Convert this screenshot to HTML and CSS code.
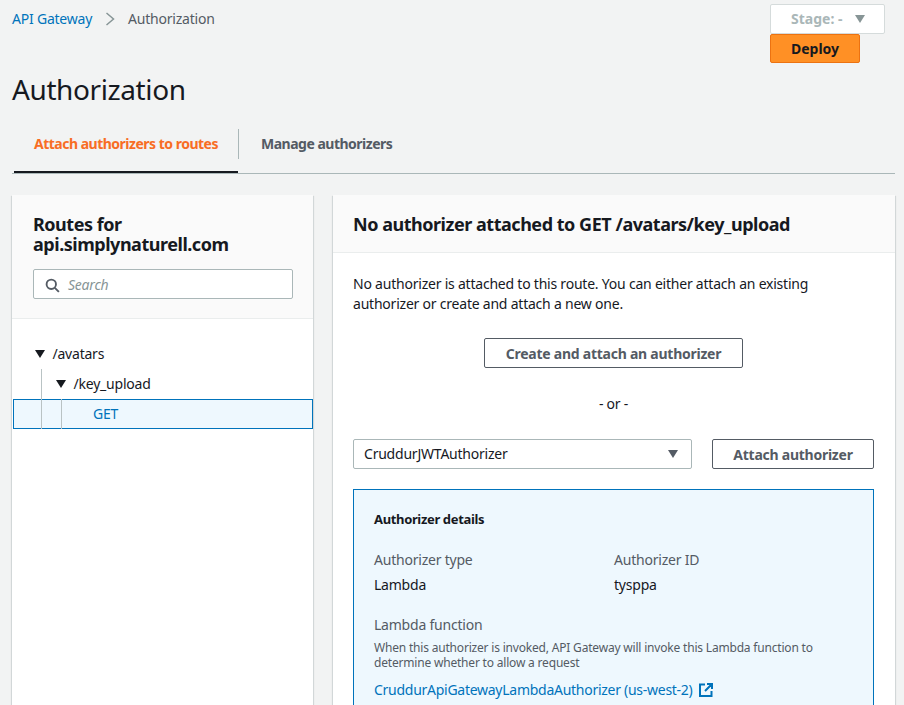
FILE: index.html
```html
<!DOCTYPE html>
<html>
<head>
    <title>Authorization</title>
    <link rel="stylesheet" href="styles.css">
</head>
<body>
    <div class="topbar">
        <nav class="crumbs">
            <a href="#">API Gateway</a>
            <svg class="crumbs__sep" width="10" height="14" viewBox="0 0 10 14"><path d="M1.5 1l7 6-7 6" fill="none" stroke="#879596" stroke-width="1.5"/></svg>
            <span>Authorization</span>
        </nav>
        <div class="actions">
            <div class="stage">
                <span>Stage: -</span>
                <span class="caret caret--grey"></span>
            </div>
            <button class="deploy">Deploy</button>
        </div>
    </div>

    <h1 class="title">Authorization</h1>

    <div class="tabs">
        <div class="tabs__item tabs__item--active">Attach authorizers to routes</div>
        <div class="tabs__item">Manage authorizers</div>
    </div>

    <div class="columns">
        <section class="panel panel--routes">
            <div class="panel__head panel__head--routes">
                <h2>Routes for api.simplynaturell.com</h2>
                <div class="search">
                    <svg width="15" height="15" viewBox="0 0 16 16"><circle cx="6.7" cy="6.7" r="5" fill="none" stroke="#545b64" stroke-width="2"/><path d="M10.500 10.500l4.300 4.300" stroke="#545b64" stroke-width="2"/></svg>
                    <span>Search</span>
                </div>
            </div>
            <div class="tree">
                <div class="tree__row tree__row--top"><span class="caret caret--dark"></span>/avatars</div>
                <div class="tree__row tree__row--child">
                    <i class="guide guide--one"></i>
                    <span class="caret caret--dark"></span>/key_upload
                </div>
                <div class="tree__row tree__row--selected">
                    <i class="guide guide--one"></i>
                    <i class="guide guide--two"></i>
                    GET
                </div>
            </div>
        </section>

        <section class="panel panel--detail">
            <div class="panel__head">
                <h2>No authorizer attached to GET /avatars/key_upload</h2>
            </div>
            <div class="panel__body">
                <p class="intro">No authorizer is attached to this route. You can either attach an existing authorizer or create and attach a new one.</p>
                <div class="center">
                    <button class="btn btn--create">Create and attach an authorizer</button>
                </div>
                <div class="or">- or -</div>
                <div class="attach">
                    <div class="select">
                        <span>CruddurJWTAuthorizer</span>
                        <span class="caret caret--slate"></span>
                    </div>
                    <button class="btn btn--attach">Attach authorizer</button>
                </div>
                <div class="details">
                    <h3>Authorizer details</h3>
                    <div class="details__grid">
                        <div>
                            <div class="details__label">Authorizer type</div>
                            <div class="details__value">Lambda</div>
                        </div>
                        <div>
                            <div class="details__label">Authorizer ID</div>
                            <div class="details__value">tysppa</div>
                        </div>
                    </div>
                    <div class="details__label">Lambda function</div>
                    <p class="details__hint">When this authorizer is invoked, API Gateway will invoke this Lambda function to determine whether to allow a request</p>
                    <a class="details__link" href="#">CruddurApiGatewayLambdaAuthorizer (us-west-2)
                        <svg width="14" height="14" viewBox="0 0 14 14"><path d="M6 1.500H1v11.500h11.500V8M8 1h5v5M13 1L6 8" fill="none" stroke="#0073bb" stroke-width="2"/></svg>
                    </a>
                </div>
            </div>
        </section>
    </div>
</body>
</html>
```

FILE: styles.css
```css
*, ::after, ::before {
    box-sizing: border-box;
}

html, body {
    height: 705px;
    overflow: hidden;
}

body {
    margin: 0;
    padding: 4px 9px 0 12px;
    background-color: #f2f3f3;
    color: #16191f;
    font-family: "Noto Sans", Arial, sans-serif;
    font-size: 14px;
    letter-spacing: -.22px;
    line-height: 20px;
}

a {
    color: #0073bb;
    text-decoration: none;
}

h1, h2, h3, p {
    margin: 0;
}

button {
    font-family: inherit;
    cursor: pointer;
}

.topbar {
    display: flex;
    justify-content: space-between;
    height: 59px;
}

.crumbs {
    display: flex;
    align-items: center;
    gap: 13px;
    height: 30px;
    color: #545b64;
}

.actions {
    display: flex;
    flex-direction: column;
    align-items: flex-start;
    width: 115px;
    margin-right: 10px;
}

.stage {
    display: flex;
    align-items: center;
    gap: 13px;
    width: 115px;
    height: 30px;
    padding-left: 20px;
    background-color: #fff;
    border: 1px solid #d5dbdb;
    border-radius: 2px;
    color: #aab7b8;
    font-weight: 700;
    letter-spacing: 0;
}

.deploy {
    width: 90px;
    height: 30px;
    padding: 0;
    background-color: #ff9025;
    border: 1px solid #ec7211;
    border-radius: 2px;
    color: #16191f;
    font-size: 14px;
    font-weight: 700;
}

.caret {
    display: inline-block;
    width: 0;
    height: 0;
    border-left: 5.5px solid transparent;
    border-right: 5.5px solid transparent;
    border-top: 8px solid #16191f;
}

.caret--grey {
    border-top-color: #879596;
}

.caret--slate {
    border-top-color: #545b64;
}

.title {
    height: 52px;
    font-size: 28px;
    font-weight: 400;
    letter-spacing: -.4px;
    line-height: 52px;
}

.tabs {
    display: flex;
    height: 49px;
    margin-top: 10px;
    border-bottom: 1px solid #aab7b8;
    color: #545b64;
    font-weight: 700;
    letter-spacing: -.5px;
}

.tabs__item {
    height: 30px;
    margin-top: 4px;
    padding: 0 22px;
    line-height: 30px;
}

.tabs__item--active {
    position: relative;
    margin-left: 2px;
    padding: 0 20px;
    border-right: 1px solid #aab7b8;
    color: #f86d24;
}

.tabs__item--active::after {
    content: "";
    position: absolute;
    left: 0;
    right: 0;
    top: 42px;
    height: 2px;
    background-color: #16191f;
}

.columns {
    display: grid;
    grid-template-columns: 301px 562px;
    gap: 20px;
    margin-top: 21px;
}

.panel {
    height: 510px;
    overflow: hidden;
    background-color: #fff;
    box-shadow: 0 1px 1px 0 rgba(0, 28, 36, .2), 1px 1px 1px 0 rgba(0, 28, 36, .1), -1px 1px 1px 0 rgba(0, 28, 36, .1);
}

.panel__head {
    height: 58px;
    padding: 19px 20px 0;
    background-color: #fafafa;
    border-bottom: 1px solid #eaeded;
}

.panel__head h2 {
    font-size: 18px;
    font-weight: 700;
    letter-spacing: -.47px;
    line-height: 20px;
}

.panel__head--routes {
    height: 124px;
    padding-left: 21px;
    padding-right: 20px;
}

.search {
    display: flex;
    align-items: center;
    gap: 8px;
    height: 30px;
    margin-top: 15px;
    padding: 2px 0 0 11px;
    background-color: #fff;
    border: 1px solid #aab7b8;
    border-radius: 2px;
    color: #879596;
    font-style: italic;
}

.tree {
    padding-top: 20px;
}

.tree__row {
    position: relative;
    display: flex;
    align-items: center;
    gap: 7.5px;
    height: 30px;
}

.tree__row--top {
    padding-left: 23px;
}

.tree__row--child {
    padding-left: 44px;
}

.tree__row--selected {
    margin-left: 1px;
    padding-left: 80px;
    background-color: #eef8fe;
    outline: 1px solid #0073bb;
    outline-offset: -1px;
    color: #0073bb;
}

.guide {
    position: absolute;
    top: 0;
    bottom: 0;
    width: 1px;
    background-color: #b9c3c4;
}

.guide--one {
    left: 29px;
}

.guide--two {
    left: 48px;
}

.tree__row--selected .guide--one {
    left: 28px;
}

.panel__body {
    padding: 21px 21px 0 20px;
}

.intro {
    width: 480px;
}

.center {
    display: flex;
    justify-content: center;
    margin-top: 24px;
}

.btn {
    height: 30px;
    padding: 0;
    background-color: #fff;
    border: 1px solid #545b64;
    border-radius: 2px;
    color: #545b64;
    font-size: 14px;
    font-weight: 700;
    letter-spacing: -.25px;
}

.btn--create {
    width: 259px;
}

.btn--attach {
    width: 162px;
}

.or {
    margin-top: 26px;
    text-align: center;
}

.attach {
    display: flex;
    justify-content: space-between;
    margin-top: 25px;
}

.select {
    display: flex;
    align-items: center;
    justify-content: space-between;
    width: 339px;
    height: 30px;
    padding: 0 13px 0 10px;
    border: 1px solid #aab7b8;
    border-radius: 2px;
}

.details {
    height: 260px;
    margin-top: 20px;
    padding: 19px 20px 20px;
    background-color: #eef8fe;
    border: 1px solid #0073bb;
}

.details h3 {
    font-size: 13px;
    font-weight: 700;
    letter-spacing: -.35px;
}

.details__grid {
    display: grid;
    grid-template-columns: 240px 1fr;
    margin: 21px 0 20px;
}

.details__label {
    color: #545b64;
}

.details__value {
    margin-top: 5px;
}

.details__hint {
    margin-top: 5px;
    color: #545b64;
    font-size: 12px;
    letter-spacing: -.19px;
    line-height: 15px;
}

.details__link {
    display: flex;
    align-items: center;
    gap: 6px;
    margin-top: 10px;
    letter-spacing: -.27px;
}
```
